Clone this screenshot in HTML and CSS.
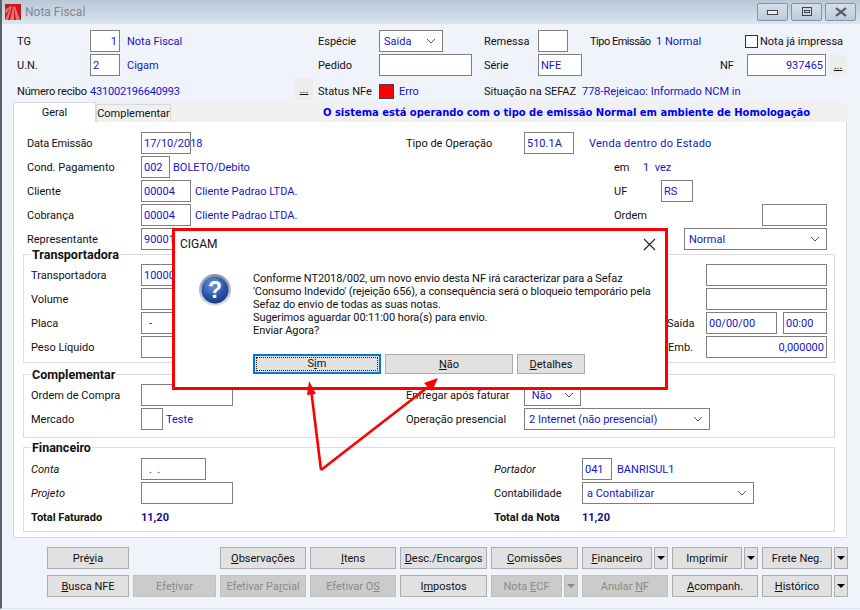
FILE: index.html
```html
<!DOCTYPE html>
<html lang="pt-BR">
<head>
<meta charset="utf-8">
<title>Nota Fiscal</title>
<link rel="stylesheet" href="styles.css">
</head>
<body>
<div class="window">
  <header class="titlebar">
    <svg class="app-icon" width="16" height="16" viewBox="0 0 16 16"><rect width="16" height="16" fill="#c8171c"/><path d="M0 16 6 2l1 0L3 16zM5 16 8 3l1 0 0 13zM11 16 9 3l1-1 5 14zM0 6l7-5-6 9z" fill="#f0b0a8" opacity=".6"/></svg>
    <span class="title-text">Nota Fiscal</span>
    <div class="win-controls">
      <span class="win-btn"><svg width="12" height="8" viewBox="0 0 12 8"><rect x=".5" y="2.5" width="10" height="4" fill="#e9eef4" stroke="#444"/></svg></span>
      <span class="win-btn"><svg width="12" height="10" viewBox="0 0 12 10"><rect x="1.5" y=".5" width="9" height="8" fill="none" stroke="#444"/><rect x="3.5" y="3.5" width="5" height="2" fill="none" stroke="#444"/></svg></span>
      <span class="win-btn"><svg width="12" height="10" viewBox="0 0 12 10"><path d="M1 1l10 8M11 1 1 9" stroke="#555" stroke-width="2.2" fill="none"/></svg></span>
    </div>
  </header>

  <section class="head">
    <div class="row">
      <span class="w73">TG</span>
      <div class="field w30 right val">1</div>
      <span class="val ml7 w191">Nota Fiscal</span>
      <span class="w61">Espécie</span>
      <div class="field w64 select val">Saída<svg class="chev" width="10" height="6" viewBox="0 0 10 6"><path d="M1 1l4 4 4-4" fill="none" stroke="#555"/></svg></div>
      <span class="ml41 w54">Remessa</span>
      <div class="field w30"></div>
      <span class="ml22 w66 tighter">Tipo Emissão</span>
      <span class="val w89">1 Normal</span>
      <span class="check"></span>
      <span class="ml2">Nota já impressa</span>
    </div>
    <div class="row">
      <span class="w73">U.N.</span>
      <div class="field w30 val">2</div>
      <span class="val ml7 w191">Cigam</span>
      <span class="w61">Pedido</span>
      <div class="field w93"></div>
      <span class="ml12 w54">Série</span>
      <div class="field w44 val">NFE</div>
      <span class="ml138 w27">NF</span>
      <div class="field w79 right val">937465</div>
      <span class="dots dots-sm ml3">...</span>
    </div>
    <div class="row row-low">
      <span class="w73 tight">Número recibo</span>
      <span class="val w205 tight">431002196640993</span>
      <span class="dots">...</span>
      <span class="ml5 w61">Status NFe</span>
      <span class="status"></span>
      <span class="val ml5 w85">Erro</span>
      <span class="w98">Situação na SEFAZ</span>
      <span class="val">778-Rejeicao: Informado NCM in</span>
    </div>
  </section>

  <nav class="tabs">
    <span class="tab active">Geral</span>
    <span class="tab">Complementar</span>
    <strong class="notice">O sistema está operando com o tipo de emissão Normal em ambiente de Homologação</strong>
  </nav>

  <main class="panel">
    <div class="row indent">
      <span class="w114 tight">Data Emissão</span>
      <div class="field w50 val">17/10/2018</div>
      <span class="ml215 w118">Tipo de Operação</span>
      <div class="field w50 val">510.1A</div>
      <span class="val ml15 wide">Venda dentro do Estado</span>
    </div>
    <div class="row indent">
      <span class="w114">Cond. Pagamento</span>
      <div class="field w29 val">002</div>
      <span class="val ml3 w441">BOLETO/Debito</span>
      <span class="w29">em</span>
      <span class="val">1&nbsp; vez</span>
    </div>
    <div class="row indent">
      <span class="w114">Cliente</span>
      <div class="field w50 val">00004</div>
      <span class="val ml4 w419">Cliente Padrao LTDA.</span>
      <span class="w47">UF</span>
      <div class="field w32 val">RS</div>
    </div>
    <div class="row indent">
      <span class="w114">Cobrança</span>
      <div class="field w50 val">00004</div>
      <span class="val ml4 w419">Cliente Padrao LTDA.</span>
      <span class="w148">Ordem</span>
      <div class="field w65"></div>
    </div>
    <div class="row indent">
      <span class="w114">Representante</span>
      <div class="field w50 val">90001</div>
      <div class="field w143 select val push">Normal<svg class="chev" width="10" height="6" viewBox="0 0 10 6"><path d="M1 1l4 4 4-4" fill="none" stroke="#555"/></svg></div>
    </div>

    <section class="group g-transp">
      <h3 class="legend">Transportadora</h3>
      <div class="row">
        <span class="w110">Transportadora</span>
        <div class="field w50 val">10000</div>
        <div class="field w121 push"></div>
      </div>
      <div class="row">
        <span class="w110">Volume</span>
        <div class="field w50"></div>
        <div class="field w121 push"></div>
      </div>
      <div class="row">
        <span class="w110">Placa</span>
        <div class="field w50 val pad">-</div>
        <span class="push w39">Saída</span>
        <div class="field w71 val">00/00/00</div>
        <div class="field w44 val ml6">00:00</div>
      </div>
      <div class="row">
        <span class="w110">Peso Líquido</span>
        <div class="field w50"></div>
        <span class="push w38">Emb.</span>
        <div class="field w121 right val">0,000000</div>
      </div>
    </section>

    <section class="group g-compl">
      <h3 class="legend">Complementar</h3>
      <div class="row">
        <span class="w110">Ordem de Compra</span>
        <div class="field w92"></div>
        <span class="ml173 w118">Entregar após faturar</span>
        <div class="field w57 select val">&nbsp;Não<svg class="chev" width="10" height="6" viewBox="0 0 10 6"><path d="M1 1l4 4 4-4" fill="none" stroke="#555"/></svg></div>
      </div>
      <div class="row">
        <span class="w110">Mercado</span>
        <div class="field w22"></div>
        <span class="val ml3 w240">Teste</span>
        <span class="w118">Operação presencial</span>
        <div class="field w186 select val">2 Internet (não presencial)<svg class="chev" width="10" height="6" viewBox="0 0 10 6"><path d="M1 1l4 4 4-4" fill="none" stroke="#555"/></svg></div>
      </div>
    </section>

    <section class="group g-fin">
      <h3 class="legend">Financeiro</h3>
      <div class="row">
        <em class="w110">Conta</em>
        <div class="field w65 val pad">.&nbsp; .</div>
        <em class="ml288 w88">Portador</em>
        <div class="field w30 val">041</div>
        <span class="val ml5">BANRISUL1</span>
      </div>
      <div class="row">
        <em class="w110">Projeto</em>
        <div class="field w92"></div>
        <span class="ml261 w88">Contabilidade</span>
        <div class="field w172 select val">a Contabilizar<svg class="chev" width="10" height="6" viewBox="0 0 10 6"><path d="M1 1l4 4 4-4" fill="none" stroke="#555"/></svg></div>
      </div>
      <div class="row">
        <b class="w110">Total Faturado</b>
        <b class="total w353">11,20</b>
        <b class="w88">Total da Nota</b>
        <b class="total">11,20</b>
      </div>
    </section>
  </main>

  <footer class="actions">
    <div class="btn-row">
      <button class="btn w82">Pré<u>v</u>ia</button>
      <span class="w83"></span>
      <button class="btn w86"><u>O</u>bservações</button>
      <button class="btn w86"><u>I</u>tens</button>
      <button class="btn w87"><u>D</u>esc./Encargos</button>
      <button class="btn w87"><u>C</u>omissões</button>
      <div class="split w86"><button class="btn grow"><u>F</u>inanceiro</button><button class="btn arrow"><i class="tri"></i></button></div>
      <div class="split w86"><button class="btn grow">Im<u>p</u>rimir</button><button class="btn arrow"><i class="tri"></i></button></div>
      <div class="split w86"><button class="btn grow">Frete Neg.</button><button class="btn arrow"><i class="tri"></i></button></div>
    </div>
    <div class="btn-row">
      <button class="btn w82"><u>B</u>usca NFE</button>
      <button class="btn off w83">Efe<u>t</u>ivar</button>
      <button class="btn off w86">Efetivar Pa<u>r</u>cial</button>
      <button class="btn off w86">Efetivar O<u>S</u></button>
      <button class="btn w87">I<u>m</u>postos</button>
      <div class="split w87"><button class="btn off grow">Nota <u>E</u>CF</button><button class="btn off arrow"><i class="tri"></i></button></div>
      <button class="btn off w86">Anular <u>N</u>F</button>
      <button class="btn w86"><u>A</u>companh.</button>
      <div class="split w86"><button class="btn grow"><u>H</u>istórico</button><button class="btn arrow"><i class="tri"></i></button></div>
    </div>
  </footer>

  <div class="dialog">
    <div class="dlg-title"><span>CIGAM</span>
      <svg width="13" height="13" viewBox="0 0 13 13"><path d="M1 1l11 11M12 1 1 12" stroke="#222" stroke-width="1.1" fill="none"/></svg>
    </div>
    <div class="dlg-body">
      <svg class="dlg-icon" width="34" height="34" viewBox="0 0 34 34">
        <defs>
          <radialGradient id="ball" cx=".42" cy=".3" r=".8"><stop offset="0" stop-color="#6f97dc"/><stop offset=".55" stop-color="#2c56ad"/><stop offset="1" stop-color="#142f78"/></radialGradient>
          <linearGradient id="ring" x1="0" y1="0" x2="0" y2="1"><stop offset="0" stop-color="#8d949c"/><stop offset="1" stop-color="#dfe3e8"/></linearGradient>
        </defs>
        <circle cx="17" cy="17" r="16" fill="url(#ring)"/>
        <circle cx="17" cy="17" r="13.5" fill="url(#ball)"/>
        <text x="17" y="25" text-anchor="middle" class="q">?</text>
      </svg>
      <p class="dlg-text">Conforme NT2018/002, um novo envio desta NF irá caracterizar para a Sefaz<br>'Consumo Indevido' (rejeição 656), a consequência será o bloqueio temporário pela<br>Sefaz do envio de todas as suas notas.<br>Sugerimos aguardar 00:11:00 hora(s) para envio.<br>Enviar Agora?</p>
    </div>
    <div class="dlg-btns">
      <button class="dbtn primary w128"><span class="focus">S<u>i</u>m</span></button>
      <button class="dbtn w128"><u>N</u>ão</button>
      <button class="dbtn w68"><u>D</u>etalhes</button>
    </div>
  </div>

  <svg class="arrows" width="860" height="610" viewBox="0 0 860 610">
    <path d="M309 381 316 394 307 395Z M438 378 424 383 432 391Z" fill="#f00"/>
    <path d="M321 470 311.5 393M321 470 428 387" stroke="#f00" stroke-width="2.6" fill="none" stroke-linejoin="miter"/>
  </svg>
</div>
</body>
</html>
```
FILE: styles.css
```css
* { box-sizing: border-box; }
html, body { margin: 0; padding: 0; }
body { width: 860px; height: 610px; overflow: hidden; background: #f0f3f9; font: 11px/13px Roboto, "Noto Sans", sans-serif; color: #111; }
.window { position: relative; width: 860px; height: 609px; background: #f0f3f9; border-left: 2px solid #59626c; border-bottom: 1px solid #d9e6f2; }
.titlebar { height: 24px; display: flex; align-items: center; padding-left: 3px; background: linear-gradient(#b9c7d6, #dbe5f1); }
.app-icon { flex: none; }
.title-text { margin-left: 4px; font-size: 12px; color: #808890; }
.win-controls { margin-left: auto; display: flex; gap: 3px; padding-right: 4px; align-self: flex-start; padding-top: 3px; }
.win-btn { width: 31px; height: 18px; display: flex; align-items: center; justify-content: center; border: 1px solid #8594a5; border-radius: 2px; background: linear-gradient(#d5dfea, #bccbdc); }

.row { display: flex; align-items: center; height: 22px; margin-bottom: 2px; white-space: nowrap; flex: none; }
.head { padding: 6px 0 0 15px; }
.head .row-low { height: 24px; margin-bottom: 0; padding-top: 2px; }
.row-low .dots { align-self: flex-start; margin-top: -2px; }
.val { color: #1414c8; }
.tight { letter-spacing: -.2px; }
.tighter { letter-spacing: -.5px; }
.wide { letter-spacing: .25px; }
.field { height: 22px; display: flex; align-items: center; padding: 0 2px; background: #fff; border: 1px solid #7f7f7f; flex: none; }
.right { justify-content: flex-end; }
.pad { padding-left: 7px; }
.select { padding-left: 4px; justify-content: space-between; padding-right: 6px; }
.chev { flex: none; }
.push { margin-left: auto; }
.check { width: 13px; height: 13px; background: #fff; border: 1px solid #333; flex: none; }
.status { width: 15px; height: 15px; background: #f00; border: 1px solid #444; flex: none; }
.dots { width: 18px; height: 22px; display: flex; align-items: center; justify-content: center; background: #ecedef; text-decoration: underline; flex: none; }
.dots-sm { height: 20px; }

.tabs { height: 20px; margin-left: 11px; width: 834px; display: flex; align-items: flex-end; background: #f0f0f0; }
.tab { height: 18px; width: 75px; flex: none; display: flex; align-items: center; justify-content: center; background: #f0f0f0; border: 1px solid #d9d9d9; border-bottom: 0; }
.tab.active { width: 83px; height: 20px; background: #fff; border-color: #d9d9d9; }
.notice { margin-left: 152px; align-self: center; font: bold 10px/13px "DejaVu Sans", sans-serif; letter-spacing: -.03px; color: #0000f0; white-space: nowrap; }

.panel { margin-left: 11px; width: 834px; height: 416px; padding-top: 10px; background: #fff; border: 1px solid #d9d9d9; border-top: 0; }
.indent { padding: 0 19px 0 13px; }
.group { position: relative; width: 812px; margin-left: 9px; padding: 9px 7px 0; border: 1px solid #dcdcdc; }
.g-transp { margin-top: 4px; height: 109px; }
.g-compl { margin-top: 11px; height: 64px; }
.g-fin { margin-top: 9px; height: 85px; padding-top: 10px; }
.legend { position: absolute; top: -7px; left: 7px; margin: 0; padding: 0 1px; background: #fff; font-size: 12.5px; line-height: 14px; font-weight: 700; color: #111; }
.total { color: #10108c; }
em { font-style: italic; }

.actions { padding: 9px 0 0 45px; display: flex; flex-direction: column; gap: 6px; }
.btn-row { display: flex; gap: 4px; height: 22px; }
.btn { height: 22px; padding: 0; font: inherit; color: #111; background: #e1e1e1; border: 1px solid #adadad; flex: none; white-space: nowrap; }
.btn.off { background: #cbcbcb; border-color: #bfbfbf; color: #8a8a8a; }
.split { display: flex; gap: 2px; flex: none; }
.grow { flex: 1; min-width: 0; }
.arrow { width: 14px; display: flex; align-items: center; justify-content: center; }
.tri { width: 0; height: 0; border: 4px solid transparent; border-top: 4px solid #000; border-bottom: 0; }
.off .tri { border-top-color: #8a8a8a; }

.dialog { position: absolute; left: 170px; top: 228px; width: 496px; height: 162px; background: #fff; border: 3px solid #f00; display: flex; flex-direction: column; }
.dlg-title { height: 24px; margin-top: 1px; display: flex; align-items: center; justify-content: space-between; padding: 0 9px 0 5px; font-size: 12px; }
.dlg-body { display: flex; height: 98px; padding-top: 16px; }
.dlg-icon { flex: none; margin: 1px 0 0 23px; }
.q { font: bold 23px "Liberation Sans", sans-serif; fill: #fff; }
.dlg-text { margin: 0 0 0 21px; font-size: 11px; line-height: 13px; letter-spacing: -.08px; white-space: nowrap; }
.dlg-btns { display: flex; gap: 4px; padding-left: 78px; }
.dbtn { height: 20px; padding: 0; font: inherit; background: #e1e1e1; border: 1px solid #adadad; color: #111; }
.primary { border: 2px solid #0078d7; padding: 1px; }
.focus { display: block; height: 100%; line-height: 12px; border: 1px dotted #222; }
.arrows { position: absolute; left: -2px; top: 0; pointer-events: none; }

.w22{width:22px}.w27{width:27px}.w29{width:29px}.w30{width:30px}.w32{width:32px}.w38{width:38px}.w39{width:39px}.w44{width:44px}.w47{width:47px}
.w50{width:50px}.w54{width:54px}.w57{width:57px}.w61{width:61px}.w64{width:64px}.w65{width:65px}.w66{width:66px}.w68{width:68px}.w71{width:71px}.w73{width:73px}
.w79{width:79px}.w82{width:82px}.w83{width:83px}.w85{width:85px}.w86{width:86px}.w87{width:87px}.w88{width:88px}.w89{width:89px}.w92{width:92px}.w93{width:93px}.w98{width:98px}
.w110{width:110px}.w114{width:114px}.w118{width:118px}.w121{width:121px}.w128{width:128px}.w143{width:143px}.w148{width:148px}.w172{width:172px}.w186{width:186px}.w191{width:191px}
.w205{width:205px}.w240{width:240px}.w353{width:353px}.w419{width:419px}.w441{width:441px}
.w22,.w27,.w29,.w30,.w32,.w38,.w39,.w44,.w47,.w50,.w54,.w57,.w61,.w64,.w65,.w66,.w68,.w71,.w73,.w79,.w85,.w88,.w89,.w92,.w93,.w98,.w110,.w114,.w118,.w121,.w143,.w148,.w172,.w186,.w191,.w205,.w240,.w353,.w419,.w441{flex:none}
.ml2{margin-left:2px}.ml3{margin-left:3px}.ml4{margin-left:4px}.ml5{margin-left:5px}.ml6{margin-left:6px}.ml7{margin-left:7px}.ml12{margin-left:12px}.ml15{margin-left:15px}.ml22{margin-left:22px}.ml41{margin-left:41px}
.ml138{margin-left:138px}.ml173{margin-left:173px}.ml215{margin-left:215px}.ml261{margin-left:261px}.ml288{margin-left:288px}
```
